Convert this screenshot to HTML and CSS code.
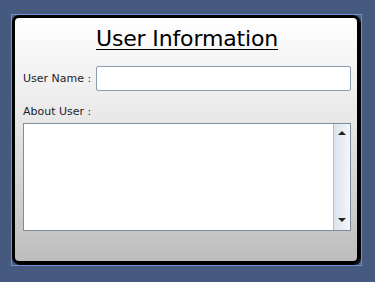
FILE: index.html
```html
<!DOCTYPE html>
<html lang="en">
<head>
  <meta charset="UTF-8">
  <title>User Information</title>
  <link rel="stylesheet" href="styles.css">
</head>
<body>
  <div class="frame">
    <div class="panel">
      <h1 class="title">User Information</h1>

      <div class="row">
        <label class="label" for="name">User Name :</label>
        <input class="input" id="name" type="text">
      </div>

      <div class="label about">About User :</div>
      <div class="textbox">
        <div class="textbox-body"></div>
        <div class="scrollbar">
          <span class="arrow up"></span>
          <span class="arrow down"></span>
        </div>
      </div>
    </div>
  </div>
</body>
</html>
```

FILE: styles.css
```css
body {
  margin: 0;
  background: #465a7f;
  font-family: "DejaVu Sans", Verdana, sans-serif;
  color: #1e1e2c;
}
.frame {
  margin: 14px 0 0 11px;
  width: 349px;
  height: 250px;
  border: 1px solid #6f93d9;
}
.panel {
  box-sizing: border-box;
  width: 348px;
  height: 249px;
  border: 3px solid #000;
  border-radius: 7px;
  box-shadow: 1px 1px 0 #000;
  background: linear-gradient(#ffffff, #e9e9e9 40%, #bdbdbd);
  padding: 8px 6px 0 8px;
}
.title {
  margin: 0;
  font-size: 22px;
  font-weight: normal;
  line-height: 26px;
  letter-spacing: -0.15px;
  text-align: center;
  text-decoration: underline;
  text-underline-offset: 3px;
  text-decoration-thickness: 1px;
  color: #000;
}
.row {
  display: flex;
  align-items: center;
  margin-top: 14px;
}
.label {
  font-size: 11px;
  line-height: 13px;
}
.input {
  flex: 1;
  margin-left: 5px;
  height: 25px;
  box-sizing: border-box;
  border: 1px solid #8c9cb3;
  border-radius: 2px;
  background: #fff;
  padding: 0;
}
.about {
  margin-top: 14px;
}
.textbox {
  display: flex;
  margin-top: 5px;
  height: 106px;
  border: 1px solid #7d8d9f;
  background: #fff;
}
.textbox-body {
  flex: 1;
}
.scrollbar {
  width: 16px;
  border-left: 1px solid #b4bdc9;
  background: linear-gradient(to right, #dde3ec, #f4f6f9);
  display: flex;
  flex-direction: column;
  justify-content: space-between;
  align-items: center;
  padding: 7px 0 8px;
}
.arrow {
  width: 0;
  height: 0;
  border-left: 4px solid transparent;
  border-right: 4px solid transparent;
}
.arrow.up {
  border-bottom: 4px solid #222;
}
.arrow.down {
  border-top: 4px solid #222;
}
```
